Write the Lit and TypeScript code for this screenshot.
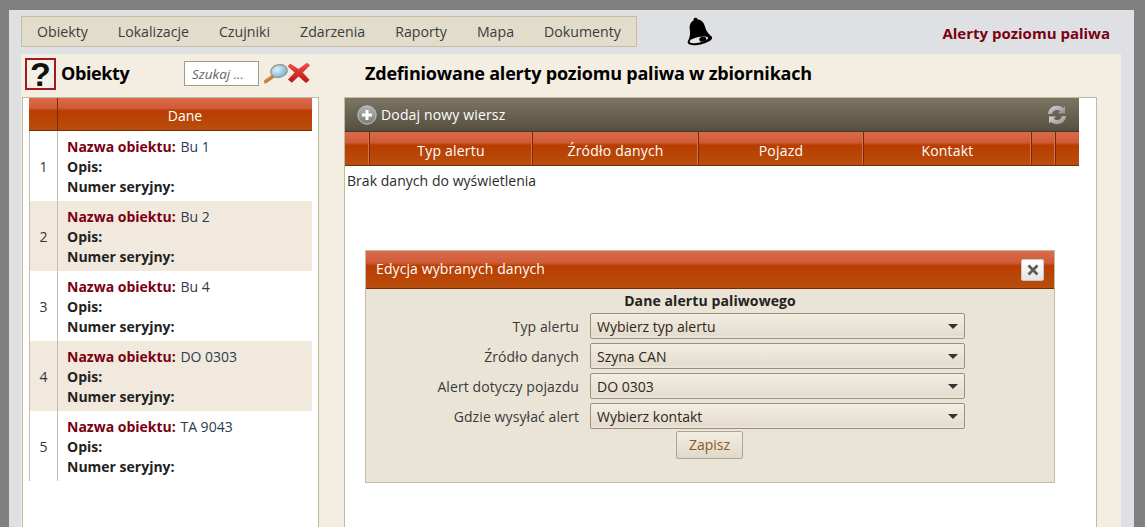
import { LitElement, html, css, svg } from "lit";
import { customElement } from "lit/decorators.js";

const NAV = ["Obiekty", "Lokalizacje", "Czujniki", "Zdarzenia", "Raporty", "Mapa", "Dokumenty"];
const ROWS = ["Bu 1", "Bu 2", "Bu 4", "DO 0303", "TA 9043"];
const COLS: [string, number][] = [["", 25], ["Typ alertu", 163], ["Źródło danych", 166], ["Pojazd", 165], ["Kontakt", 168], ["", 24], ["", 23]];
const FIELDS = [["Typ alertu", "Wybierz typ alertu"], ["Źródło danych", "Szyna CAN"], ["Alert dotyczy pojazdu", "DO 0303"], ["Gdzie wysyłać alert", "Wybierz kontakt"]];

const bell = svg`<svg class="bell" width="28" height="30" viewBox="0 0 28 30">
  <g transform="rotate(-12 14 15)">
    <path d="M14 1.5c1.3 0 2.2 1 2.1 2.2 3.6 1 5.3 4 5.6 8 .3 4 1 7 3.3 9.8H3c2.300-2.800 3-5.800 3.300-9.800.3-4 2-7 5.600-8-.1-1.200.8-2.200 2.100-2.200z" fill="#000"/>
    <ellipse cx="14" cy="24" rx="12.500" ry="4.800" fill="#000"/>
    <ellipse cx="13" cy="23.800" rx="9.500" ry="2.800" fill="#e6e6e6"/>
    <ellipse cx="17" cy="24" rx="3.600" ry="2.400" fill="#000"/>
  </g></svg>`;

const lens = svg`<svg width="25" height="22" viewBox="0 0 25 22"><defs>
  <radialGradient id="lg" cx=".4" cy=".35" r=".8"><stop offset="0" stop-color="#dff2fb"/><stop offset="1" stop-color="#5da6d0"/></radialGradient>
  <linearGradient id="hg" x1="0" y1="0" x2="1" y2="1"><stop offset="0" stop-color="#e8a860"/><stop offset="1" stop-color="#a8601c"/></linearGradient></defs>
  <path d="M1.500 19.500 10 13.500" stroke="url(#hg)" stroke-width="3.600" stroke-linecap="round"/>
  <ellipse cx="15" cy="9" rx="8.300" ry="6.400" transform="rotate(-15 15 9)" fill="url(#lg)" stroke="#9a9a8c" stroke-width="1.400"/></svg>`;

const cross = svg`<svg width="24" height="22" viewBox="0 0 24 22"><defs>
  <linearGradient id="xg" x1="0" y1="0" x2="0" y2="1"><stop offset="0" stop-color="#f0524a"/><stop offset="1" stop-color="#b81414"/></linearGradient></defs>
  <path d="M3 1.500 11.500 7 20 .8l3.200 2.400-7.400 7.200 6.800 7.600-3.600 3-7.400-6.600-6.800 6.400L1 17.500l6.600-7L.8 4.500z" fill="url(#xg)"/></svg>`;

const plus = svg`<svg width="20" height="20" viewBox="0 0 20 20"><defs>
  <linearGradient id="pg" x1="0" y1="0" x2="0" y2="1"><stop offset="0" stop-color="#b4b4b4"/><stop offset="1" stop-color="#7a7a7a"/></linearGradient></defs>
  <circle cx="10" cy="10" r="9.200" fill="url(#pg)" stroke="#c4c4c4" stroke-width="1"/>
  <path d="M10 5v10M5 10h10" stroke="#fff" stroke-width="3"/></svg>`;

const refresh = svg`<svg width="20" height="20" viewBox="0 0 20 20"><defs>
  <linearGradient id="rg" x1="0" y1="0" x2="1" y2="1"><stop offset="0" stop-color="#d8d8d8"/><stop offset="1" stop-color="#8a8a8a"/></linearGradient>
  <filter id="rb"><feGaussianBlur stdDeviation=".45"/></filter></defs>
  <g filter="url(#rb)">
  <path d="M1 9C1.500 4 5 .8 10 .8c2.500 0 4.500.8 6 2.200l2-1.500v7h-7l2.200-2.300C12.200 5.200 11 5 10 5 7 5 5.500 7 5 9z" fill="url(#rg)"/>
  <path d="M19 11c-.5 5-4 8.200-9 8.200-2.500 0-4.500-.8-6-2.200l-2 1.500v-7h7l-2.200 2.300c1 1 2.200 1.200 3.200 1.200 3 0 4.500-2 5-4z" fill="url(#rg)"/></g></svg>`;

const closeX = svg`<svg width="12" height="12" viewBox="0 0 12 12"><path d="M1.500 1.500l9 9M10.500 1.500l-9 9" stroke="#5c5c5c" stroke-width="2.800"/></svg>`;

@customElement("app-root")
export class AppRoot extends LitElement {
  static styles = css`
    :host { display: block; height: 527px; overflow: hidden; background: #808080; padding: 10px 11px 0 9px; box-sizing: border-box;
      font-family: "Open Sans", "Noto Sans", sans-serif; font-size: 14px; color: #2b2b2b; }
    .page { height: 517px; background: #dfe0e4; padding: 6px 13px 0 12px; box-sizing: border-box; display: flex; flex-direction: column; }
    .top { display: flex; align-items: flex-start; height: 38px; flex: none; }
    .nav { display: flex; width: 616px; height: 31px; box-sizing: border-box; background: #e2dccb; border: 1px solid #c9bba6; padding-left: 15px; gap: 30px; align-items: center; color: #3c3c3c; font-size: 14.170px; }
    .bellwrap { margin-left: 47px; }
    .bell { display: block; }
    .crumb { margin-left: auto; margin-right: 11px; margin-top: 7px; font-weight: 700; color: #7a0012; font-size: 15px; }
    .panel { flex: 1; background: #f4ede2; display: flex; flex-direction: column; min-height: 0; }
    .head { height: 43px; flex: none; display: flex; align-items: flex-start; }
    .help { width: 31px; height: 32px; margin: 4px 0 0 4px; box-sizing: border-box; border: 2px solid #a01c1c; background: #f4efe8; display: flex; align-items: center; justify-content: center;
      font: 700 34px/1 "Liberation Sans", sans-serif; color: #111; }
    .h-title { margin: 6px 0 0 5px; width: 123px; font-weight: 700; font-size: 18px; color: #000; letter-spacing: -0.4px; line-height: 26px; }
    .search { width: 75px; height: 25px; margin-top: 7px; box-sizing: border-box; background: #fff; border: 1px solid #a39a8a; padding-left: 7px; font-style: italic; font-size: 13.500px; line-height: 24px; color: #666; }
    .ic { margin: 8px 0 0 5px; }
    .ic2 { margin: 8px 0 0 -2px; }
    .m-title { margin: 6px 0 0 54px; font-weight: 700; font-size: 18px; color: #000; letter-spacing: -0.2px; line-height: 26px; }
    .cols { flex: 1; display: flex; min-height: 0; }
    .lbox { width: 297px; margin-left: 1px; box-sizing: border-box; background: #fff; border: 1px solid #c0bb9f; border-bottom: 0; padding-left: 6px; padding-right: 6px; }
    .rbox { width: 753px; margin-left: 25px; box-sizing: border-box; background: #fff; border: 1px solid #c0bb9f; border-bottom: 0; position: relative; }
    .red { background: linear-gradient(#dc6a4a 0, #cf5c38 32%, #b93c00 40%, #b84f0c 100%); color: #fff; }
    .lhead { display: flex; height: 32px; border-bottom: 1px solid #7a2a08; text-align: center; line-height: 36px; }
    .lhead .n { width: 28px; border-right: 1px solid #7a2a08; flex: none; }
    .lhead .d { flex: 1; }
    .row { display: flex; height: 70px; }
    .row.alt { background: #f1e9dd; }
    .row .n { width: 27px; flex: none; border-left: 1px solid #c6bcb0; border-right: 1px solid #c6bcb0; text-align: center; line-height: 72px; color: #333; }
    .row .c { padding: 6px 0 0 9px; line-height: 20px; font-weight: 700; color: #222; }
    .lab { color: #7a0012; }
    .val { font-weight: 400; color: #2d3b4f; margin-left: 1px; }
    .tool { width: 734px; height: 34px; box-sizing: border-box; display: flex; align-items: center; padding: 0 12px; background: linear-gradient(#7c7564, #564f40); border-bottom: 1px solid #3d382e; color: #fff; gap: 4px; letter-spacing: 0.15px; }
    .tool .r { margin-left: auto; display: flex; }
    .tool svg { flex: none; }
    .thead { display: flex; width: 734px; height: 34px; border-bottom: 1px solid #7a2a08; box-sizing: border-box; letter-spacing: 0.2px; }
    .thead div { box-sizing: border-box; text-align: center; line-height: 37px; border-right: 1px solid #7a2a08; box-shadow: inset -1px 0 0 #d8704a; height: 33px; }
    .thead div:last-child { border-right: 0; box-shadow: none; }
    .none { padding: 5px 0 0 2px; line-height: 20px; color: #2b2b2b; letter-spacing: 0.04px; }
    .dlg { position: absolute; left: 20px; top: 152px; width: 690px; height: 233px; box-sizing: border-box; background: #eae4d7; border: 1px solid #c2bba6; }
    .dlg-t { height: 38px; box-sizing: border-box; border-bottom: 1px solid #7a2a08; display: flex; align-items: center; justify-content: space-between; padding: 0 10px; letter-spacing: 0.1px; }
    .dlg-t > span:first-child { margin-top: -2px; }
    .x { width: 23px; height: 22px; box-sizing: border-box; background: linear-gradient(#fff, #e4e4e4); border: 1px solid #c8c8c8; border-radius: 2px; display: flex; align-items: center; justify-content: center; }
    .sub { text-align: center; font-weight: 700; line-height: 20px; margin-top: 2px; color: #222; letter-spacing: 0.1px; }
    .form { display: flex; flex-direction: column; gap: 4px; margin-top: 2px; }
    .f { display: flex; height: 26px; align-items: center; }
    .f label { width: 213px; text-align: right; color: #3a3a3a; letter-spacing: 0.1px; }
    .sel { margin-left: 11px; width: 375px; height: 26px; box-sizing: border-box; border: 1px solid #9a9080; border-radius: 2px; background: linear-gradient(#f3ede2, #e2dbcc); box-shadow: inset 0 -2px 0 #eae4d7; padding-left: 6px; line-height: 26px; position: relative; color: #2e2618; }
    .sel::after { content: ""; position: absolute; right: 6px; top: 10px; border-left: 5px solid transparent; border-right: 5px solid transparent; border-top: 5px solid #333; }
    .btnrow { display: flex; margin-top: 2px; padding-left: 310px; }
    .btn { width: 67px; height: 28px; box-sizing: border-box; border: 1px solid #aca494; border-radius: 2px; background: linear-gradient(#f3ede2, #e0d9ca); text-align: center; line-height: 26px; color: #8a5a1c; }
  `;

  render() {
    return html`<div class="page">
      <div class="top">
        <div class="nav">${NAV.map((n) => html`<span>${n}</span>`)}</div>
        <div class="bellwrap">${bell}</div>
        <div class="crumb">Alerty poziomu paliwa</div>
      </div>
      <div class="panel">
        <div class="head">
          <div class="help">?</div>
          <div class="h-title">Obiekty</div>
          <div class="search">Szukaj ...</div>
          <div class="ic">${lens}</div>
          <div class="ic2">${cross}</div>
          <div class="m-title">Zdefiniowane alerty poziomu paliwa w zbiornikach</div>
        </div>
        <div class="cols">
          <div class="lbox">
            <div class="lhead red"><div class="n"></div><div class="d">Dane</div></div>
            ${ROWS.map((r, i) => html`<div class="row ${i % 2 ? "alt" : ""}">
              <div class="n">${i + 1}</div>
              <div class="c">
                <div><span class="lab">Nazwa obiektu:</span> <span class="val">${r}</span></div>
                <div>Opis:</div>
                <div>Numer seryjny:</div>
              </div>
            </div>`)}
          </div>
          <div class="rbox">
            <div class="tool">${plus}<span>Dodaj nowy wiersz</span><span class="r">${refresh}</span></div>
            <div class="thead red">${COLS.map(([t, w]) => html`<div style="width:${w}px">${t}</div>`)}</div>
            <div class="none">Brak danych do wyświetlenia</div>
            <div class="dlg">
              <div class="dlg-t red"><span>Edycja wybranych danych</span><span class="x">${closeX}</span></div>
              <div class="sub">Dane alertu paliwowego</div>
              <div class="form">
                ${FIELDS.map(([l, v]) => html`<div class="f"><label>${l}</label><div class="sel">${v}</div></div>`)}
              </div>
              <div class="btnrow"><div class="btn">Zapisz</div></div>
            </div>
          </div>
        </div>
      </div>
    </div>`;
  }
}
